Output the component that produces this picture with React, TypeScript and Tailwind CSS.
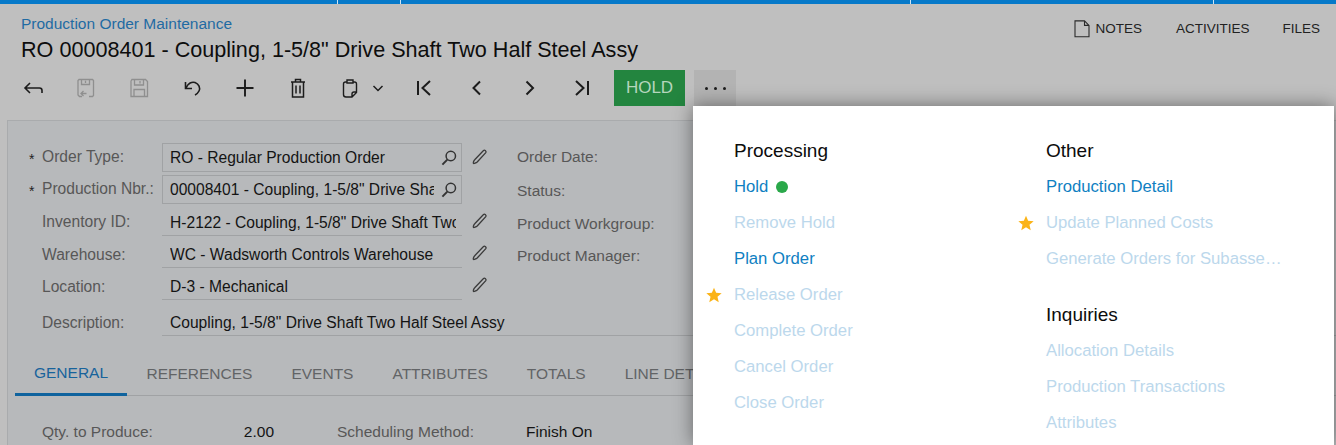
import type { ReactNode } from "react"

const font = "font-['Liberation_Sans',Arial,sans-serif]"

function Svg({ children, size = 24, className = "" }: { children: ReactNode; size?: number; className?: string }) {
  return (
    <svg width={size} height={size} viewBox="0 0 24 24" fill="none" stroke="currentColor" strokeWidth="1.6" className={className}>
      {children}
    </svg>
  )
}

function ToolButton({ width = 53, disabled = false, children }: { width?: number; disabled?: boolean; children: ReactNode }) {
  return (
    <div
      className={`flex h-9 items-center justify-center ${disabled ? "text-[#8f8f8f]" : "text-[#1c1c1c]"}`}
      style={{ width }}
    >
      {children}
    </div>
  )
}

function Pencil() {
  return (
    <svg width="18" height="18" viewBox="0 0 18 18" fill="none" stroke="#3a3a3a" strokeWidth="1.3">
      <path d="M12.5 2.500c1.200-1 3.300.8 2.300 2.200L6.200 14c-1 1-3.400 1.800-3.800 1.400-.4-.4.3-2.700 1.300-3.700z" />
    </svg>
  )
}

function Lens() {
  return (
    <svg width="16" height="16" viewBox="0 0 16 16" fill="none" stroke="#333" strokeWidth="1.5">
      <circle cx="9.800" cy="6" r="4.700" />
      <path d="M6.300 9.600 1.400 14.600" strokeWidth="2" />
    </svg>
  )
}

function FormRow({
  label,
  required,
  value,
  boxed,
  pencil,
  lens,
  lowLabel,
  height = 32,
}: {
  label: string
  required?: boolean
  value: string
  boxed?: boolean
  pencil?: boolean
  lens?: boolean
  lowLabel?: boolean
  height?: number
}) {
  return (
    <div className="flex w-[450px] items-start" style={{ height }}>
      <div
        className={`relative h-7 w-[120px] whitespace-nowrap text-[15.600px] leading-7 text-[#575757] ${
          lowLabel ? "pt-[2px]" : boxed ? "" : "pt-px"
        }`}
      >
        {required && <span className="absolute -left-[13px] top-[2px] text-[14px] text-[#222]">*</span>}
        {label}
      </div>
      <div
        className={`flex h-[29px] w-[300px] items-center overflow-hidden whitespace-nowrap text-[15.600px] text-[#141414] ${
          boxed ? "border border-[#a0a2a4] pl-[7px] pr-1" : "border-b border-[#a0a2a4] pl-2 pr-[6px] pt-[4px]"
        }`}
      >
        <span className={`min-w-0 flex-1 overflow-hidden ${lens && !pencil ? "mr-[7px]" : lens ? "mr-1" : ""}`}>{value}</span>
        {lens && <Lens />}
      </div>
      {pencil && (
        <div className="ml-[9px] flex h-7 items-center">
          <Pencil />
        </div>
      )}
    </div>
  )
}

function MenuItem({ label, active, star, dot }: { label: string; active?: boolean; star?: boolean; dot?: boolean }) {
  return (
    <div className={`relative flex h-9 items-center whitespace-nowrap text-[16.700px] ${active ? "text-[#0f7fc2]" : "text-[#bcd8ec]"}`}>
      {star && (
        <svg width="16" height="16" viewBox="0 0 24 24" fill="#fbb316" className="absolute -left-[28px] top-[10px]">
          <path d="M12 1l3.200 7.600 8.300.7-6.300 5.400 1.900 8.100L12 18.500l-7.100 4.300 1.900-8.100L.5 9.300l8.300-.7z" />
        </svg>
      )}
      {label}
      {dot && <span className="ml-[8px] h-3 w-3 rounded-full bg-[#2aa84a]" />}
    </div>
  )
}

function MenuHeading({ children }: { children: ReactNode }) {
  return <div className="flex h-9 items-center text-[19px] text-[#0c0c0c]">{children}</div>
}

export default function App() {
  const tabs = ["REFERENCES", "EVENTS", "ATTRIBUTES", "TOTALS", "LINE DET"]

  return (
    <div className={`relative h-[445px] w-[1336px] overflow-hidden bg-[#bfbfbf] ${font}`}>
      <div className="flex h-1 bg-[#0679c9]">
        <div className="w-[338px] border-r border-[#cfe4f4]" />
        <div className="w-[63px] border-r border-[#cfe4f4]" />
        <div className="w-[510px] border-r border-[#cfe4f4]" />
        <div className="w-[303px] border-r border-[#cfe4f4]" />
      </div>

      <div className="flex items-start justify-between pl-[21px] pr-4">
        <div>
          <div className="mt-[10px] h-[19px] text-[15.500px] leading-[19px] text-[#1f6ba3]">Production Order Maintenance</div>
          <div className="mt-[4px] h-[26px] text-[21.600px] leading-[26px] text-[#0d0d0d]">
            RO 00008401 - Coupling, 1-5/8" Drive Shaft Two Half Steel Assy
          </div>
        </div>
        <div className="mt-[15px] flex items-center text-[13.500px] text-[#222]">
          <svg width="16" height="18" viewBox="0 0 16 18" fill="none" stroke="#2a2a2a" strokeWidth="1.1" className="mr-[5px]">
            <path d="M1 .9h9.500L15 5.400V16.700H1zM10.500.9v4.500H15" />
          </svg>
          NOTES
          <span className="ml-[34px]">ACTIVITIES</span>
          <span className="ml-[33px]">FILES</span>
        </div>
      </div>

      <div className="mt-[7px] flex h-9 items-center pl-[6px]">
        <ToolButton>
          <Svg>
            <path d="M21 17v-2.500c0-1.600-1-2.500-2.500-2.500H4M9 7l-5 5 5 5" />
          </Svg>
        </ToolButton>
        <ToolButton disabled>
          <Svg>
            <path d="M8 20.500H5.500L4 19V4.500L5 3.500h13.500l1 1v15l-1 1H15M7.500 3.500v5h8v-5M11.500 4.800v2.200M12.500 17.500H7M9.500 15 7 17.500 9.500 20" strokeWidth="1.300" />
          </Svg>
        </ToolButton>
        <ToolButton disabled>
          <Svg>
            <path d="M4 5l1-1.500h13.500l2 2V20.500H4zM7.500 3.500v5.500h9V3.500M7 20.500v-7h10.500v7M13 5v2.500" strokeWidth="1.300" />
          </Svg>
        </ToolButton>
        <ToolButton>
          <Svg>
            <path d="M6 12C8 7 12 5.500 15 6.500 19 8 20.500 12 19 15 18 17 17 18 15 19M5.500 6v6.500H12" />
          </Svg>
        </ToolButton>
        <ToolButton>
          <Svg>
            <path d="M12 3.500v17M3.500 12h17" strokeWidth="1.900" />
          </Svg>
        </ToolButton>
        <ToolButton>
          <Svg>
            <path d="M5 6h14M9.500 6V3.500h5V6M6.500 6v15h11V6M10 9.500v8M14 9.500v8" strokeWidth="1.500" />
          </Svg>
        </ToolButton>
        <ToolButton width={52}>
          <Svg>
            <path d="M9 6H7.500C6.500 6 5.500 7 5.500 8v10.500c0 1.300 1 2.500 2.500 2.500h6l4.500-4.500V8c0-1-1-2-2-2H15M9 4h6v3H9zM18.500 16h-2.500c-1 0-2 1-2 2v3" strokeWidth="1.400" />
          </Svg>
        </ToolButton>
        <div className="-ml-[10px] flex w-[24px] justify-center text-[#1c1c1c]">
          <svg width="12" height="12" viewBox="0 0 12 12" fill="none" stroke="currentColor" strokeWidth="1.500">
            <path d="M1.500 4 6 8.500 10.500 4" />
          </svg>
        </div>
        <div className="ml-[7px] flex">
          <ToolButton>
            <Svg>
              <path d="M6 5v14M18 5l-7.500 7 7.500 7" strokeWidth="2" />
            </Svg>
          </ToolButton>
          <ToolButton>
            <Svg>
              <path d="M15 5.500 8.500 12l6.500 6.500" strokeWidth="2" />
            </Svg>
          </ToolButton>
          <ToolButton>
            <Svg>
              <path d="M8.500 5.500 15 12l-6.500 6.500" strokeWidth="2" />
            </Svg>
          </ToolButton>
          <ToolButton>
            <Svg>
              <path d="M17 5v14M5 5l7.500 7L5 19" strokeWidth="2" />
            </Svg>
          </ToolButton>
        </div>
        <div className="ml-[5px] flex h-9 w-[71px] items-center justify-center bg-[#23853f] text-[17px] text-[#b5d6bd]">HOLD</div>
        <div className="ml-[9px] flex h-9 w-[42px] items-center justify-center gap-[6px] bg-[#b3b3b3]">
          <span className="h-[3px] w-[3px] rounded-full bg-[#1c1c1c]" />
          <span className="h-[3px] w-[3px] rounded-full bg-[#1c1c1c]" />
          <span className="h-[3px] w-[3px] rounded-full bg-[#1c1c1c]" />
        </div>
      </div>

      <div className="ml-[7px] mt-[14px] h-[400px] border-l border-t border-[#a9abad] bg-[#b7b9bb]">
        <div className="flex pl-[34px] pt-[22px]">
          <div>
            <FormRow label="Order Type:" required value="RO - Regular Production Order" boxed lens pencil />
            <FormRow label="Production Nbr.:" required value={'00008401 - Coupling, 1-5/8" Drive Shaf'} boxed lens />
            <FormRow label="Inventory ID:" value={'H-2122 - Coupling, 1-5/8" Drive Shaft Two'} pencil />
            <FormRow label="Warehouse:" value="WC - Wadsworth Controls Warehouse" pencil lowLabel />
            <FormRow label="Location:" value="D-3 - Mechanical" pencil lowLabel height={36} />
          </div>
          <div className="ml-[25px] flex flex-col text-[15.500px] text-[#575757]">
            <div className="h-[34px] leading-7">Order Date:</div>
            <div className="h-[33px] leading-7">Status:</div>
            <div className="h-[32px] leading-7">Product Workgroup:</div>
            <div className="h-8 leading-7">Product Manager:</div>
          </div>
        </div>

        <div className="flex h-[29px] items-start pl-[34px]">
          <div className="h-7 w-[120px] pt-[2px] text-[15.600px] leading-7 text-[#575757]">Description:</div>
          <div className="flex h-[29px] flex-1 items-center border-b border-[#a0a2a4] pl-2 pt-[4px] text-[15.600px] text-[#141414]">
            Coupling, 1-5/8" Drive Shaft Two Half Steel Assy
          </div>
        </div>

        <div className="ml-[7px] mt-[16px] flex h-[44px] items-stretch border-b border-[#a0a2a4] text-[15.500px]">
          <div className="-mb-px flex w-[112px] items-center justify-center border-b-[3px] border-[#0f639e] text-[#17639b]">GENERAL</div>
          {tabs.map((tab) => (
            <div key={tab} className="flex items-center whitespace-nowrap px-[19.500px] text-[#626466]">
              {tab}
            </div>
          ))}
        </div>

        <div className="mt-[24px] flex pl-[34px] text-[15.500px]">
          <div className="w-[145px] text-[#575757]">Qty. to Produce:</div>
          <div className="w-[87px] text-right text-[#141414]">2.00</div>
          <div className="ml-[63px] w-[189px] text-[#575757]">Scheduling Method:</div>
          <div className="text-[#141414]">Finish On</div>
        </div>
      </div>

      <div className="absolute left-[693px] top-[106px] flex h-[339px] w-[641px] bg-white pl-[41px] pt-[27px] shadow-[0_0_18px_rgba(0,0,0,0.45)]">
        <div className="w-[312px]">
          <MenuHeading>Processing</MenuHeading>
          <MenuItem label="Hold" active dot />
          <MenuItem label="Remove Hold" />
          <MenuItem label="Plan Order" active />
          <MenuItem label="Release Order" star />
          <MenuItem label="Complete Order" />
          <MenuItem label="Cancel Order" />
          <MenuItem label="Close Order" />
        </div>
        <div className="w-[240px]">
          <MenuHeading>Other</MenuHeading>
          <MenuItem label="Production Detail" active />
          <MenuItem label="Update Planned Costs" star />
          <MenuItem label="Generate Orders for Subasse…" />
          <div className="h-[20px]" />
          <MenuHeading>Inquiries</MenuHeading>
          <MenuItem label="Allocation Details" />
          <MenuItem label="Production Transactions" />
          <MenuItem label="Attributes" />
        </div>
      </div>
    </div>
  )
}
